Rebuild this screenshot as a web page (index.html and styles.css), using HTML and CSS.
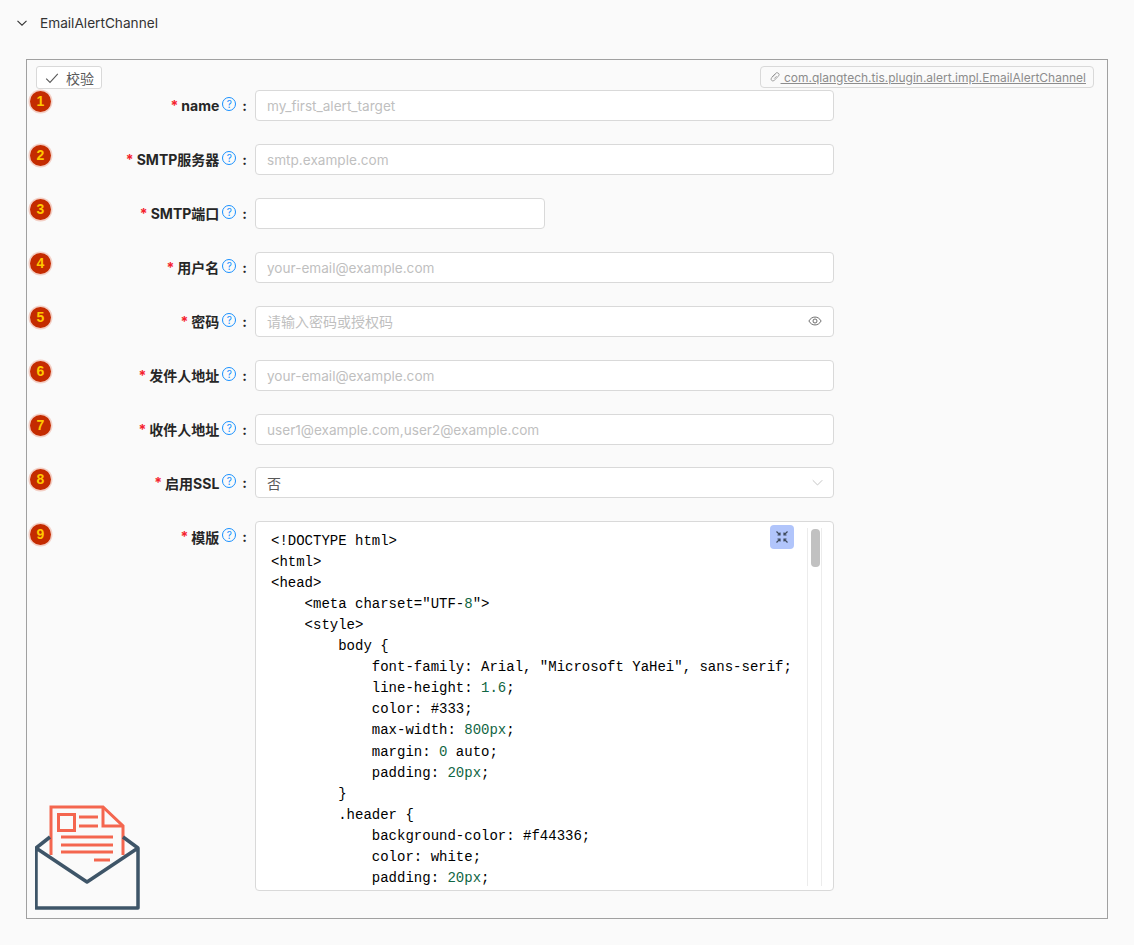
FILE: index.html
```html
<!DOCTYPE html>
<html lang="en">
<head>
    <meta charset="UTF-8">
    <title>EmailAlertChannel</title>
    <link rel="stylesheet" href="styles.css">
</head>
<body>
    <div class="panel-head">
        <svg class="chevron" viewBox="0 0 12 12"><path d="M1.5 3.8 6 8.2l4.5-4.4"/></svg>
        <span>EmailAlertChannel</span>
    </div>
    <div class="panel">
        <div class="toolbar">
            <button class="check-btn">
                <svg viewBox="0 0 14 14"><path d="M1.2 7.6 5 11.4 12.8 2.8"/></svg>
                <span>校验</span>
            </button>
            <a class="plugin-link">
                <svg viewBox="0 0 12 12"><path d="M6.8 2.6 2.6 6.8a1.8 1.8 0 0 0 2.6 2.6l4.6-4.6a1.3 1.3 0 0 0-3.4-2.2L2.9 6.1M5.2 7.6l2.4-2.4"/></svg>
                <span>&nbsp;com.qlangtech.tis.plugin.alert.impl.EmailAlertChannel</span>
            </a>
        </div>

        <div class="row">
            <div class="badge">1</div>
            <label class="label"><i>*</i><span>name</span><b class="help">?</b><em>:</em></label>
            <input class="input" placeholder="my_first_alert_target">
        </div>
        <div class="row">
            <div class="badge">2</div>
            <label class="label"><i>*</i><span>SMTP服务器</span><b class="help">?</b><em>:</em></label>
            <input class="input" placeholder="smtp.example.com">
        </div>
        <div class="row">
            <div class="badge">3</div>
            <label class="label"><i>*</i><span>SMTP端口</span><b class="help">?</b><em>:</em></label>
            <input class="input short">
        </div>
        <div class="row">
            <div class="badge">4</div>
            <label class="label"><i>*</i><span>用户名</span><b class="help">?</b><em>:</em></label>
            <input class="input" placeholder="your-email@example.com">
        </div>
        <div class="row">
            <div class="badge">5</div>
            <label class="label"><i>*</i><span>密码</span><b class="help">?</b><em>:</em></label>
            <div class="input with-icon">
                <span class="hint">请输入密码或授权码</span>
                <svg class="eye" viewBox="0 0 16 16"><path d="M1 8c1.800-3 4.100-4.500 7-4.500S13.200 5 15 8c-1.800 3-4.100 4.500-7 4.500S2.800 11 1 8z"/><circle cx="8" cy="8" r="2.300"/></svg>
            </div>
        </div>
        <div class="row">
            <div class="badge">6</div>
            <label class="label"><i>*</i><span>发件人地址</span><b class="help">?</b><em>:</em></label>
            <input class="input" placeholder="your-email@example.com">
        </div>
        <div class="row">
            <div class="badge">7</div>
            <label class="label"><i>*</i><span>收件人地址</span><b class="help">?</b><em>:</em></label>
            <input class="input" placeholder="user1@example.com,user2@example.com">
        </div>
        <div class="row">
            <div class="badge low">8</div>
            <label class="label"><i>*</i><span>启用SSL</span><b class="help">?</b><em>:</em></label>
            <div class="input with-icon">
                <span class="value">否</span>
                <svg class="caret" viewBox="0 0 12 12"><path d="M.8 3.500 6 8.700l5.200-5.200"/></svg>
            </div>
        </div>
        <div class="row">
            <div class="badge lower">9</div>
            <label class="label"><i>*</i><span>模版</span><b class="help">?</b><em>:</em></label>
            <div class="editor">
<pre class="code">&lt;!DOCTYPE html&gt;
&lt;html&gt;
&lt;head&gt;
    &lt;meta charset="UTF-<span class="num">8</span>"&gt;
    &lt;style&gt;
        body {
            font-family: Arial, "Microsoft YaHei", sans-serif;
            line-height: <span class="num">1.6</span>;
            color: #333;
            max-width: <span class="num">800px</span>;
            margin: <span class="num">0</span> auto;
            padding: <span class="num">20px</span>;
        }
        .header {
            background-color: #f44336;
            color: white;
            padding: <span class="num">20px</span>;</pre>
                <div class="track"><div class="thumb"></div></div>
                <button class="shrink">
                    <svg viewBox="0 0 14 14"><path d="M1.500 1.500 5 5M5 2.500V5H2.500M12.500 1.500 9 5M9 2.500V5h2.500M1.500 12.500 5 9M5 11.500V9H2.500M12.500 12.500 9 9M9 11.500V9h2.500"/></svg>
                </button>
            </div>
        </div>

        <svg class="mail-icon" viewBox="0 0 106 106">
            <g class="paper">
                <path d="M16 50V2h52l20 19v29"/>
                <path d="M68 2v19h20"/>
                <rect x="23.500" y="9.500" width="16" height="16"/>
                <path d="M44 12h19M44 21h19M26 32h52M26 40h52M26 47h52M59 55h16"/>
            </g>
            <g class="envelope">
                <path d="M1 43v60h102V43L52 77 1 43zM1 43l14-11M103 43 88 32"/>
            </g>
        </svg>
    </div>
</body>
</html>
```
FILE: styles.css
```css
* {
    box-sizing: border-box;
}
body {
    margin: 0;
    background-color: #fafafa;
    color: #262626;
    font-family: Inter, "Noto Sans CJK SC", sans-serif;
    font-size: 14px;
}
.panel-head {
    display: flex;
    align-items: center;
    gap: 12px;
    height: 45px;
    padding-left: 16px;
    font-size: 13.65px;
    color: #333;
}
.chevron {
    width: 12px;
    height: 12px;
    fill: none;
    stroke: #333;
    stroke-width: 1.1;
}
.panel {
    position: relative;
    width: 1082px;
    height: 860px;
    margin: 14px 0 0 26px;
    border: 1px solid #a0a0a0;
}
.toolbar {
    display: flex;
    justify-content: space-between;
    align-items: flex-start;
    height: 29.8px;
    padding: 6px 13px 0 9px;
}
.check-btn {
    display: flex;
    align-items: center;
    gap: 7px;
    width: 66px;
    height: 23px;
    padding: 0 0 0 8px;
    border: 1px solid #d9d9d9;
    border-radius: 3px;
    background: #fff;
    color: #595959;
    font: inherit;
    white-space: nowrap;
}
.check-btn svg {
    flex: none;
    width: 14px;
    height: 14px;
    fill: none;
    stroke: #595959;
    stroke-width: 1.1;
}
.plugin-link {
    display: flex;
    align-items: center;
    height: 22px;
    padding: 0 7px 0 7px;
    border: 1px solid #d9d9d9;
    border-radius: 4px;
    color: #8c8c8c;
    font-size: 12px;
    text-decoration: underline;
}
.plugin-link svg {
    width: 12px;
    height: 12px;
    margin-left: 1px;
    fill: none;
    stroke: #8c8c8c;
    stroke-width: .8;
}
.row {
    display: flex;
    align-items: flex-start;
    margin-bottom: 22.96px;
    padding-left: 3px;
}
.badge {
    flex: none;
    width: 21px;
    height: 21px;
    margin-top: 1px;
    border-radius: 50%;
    background: #c42b00;
    box-shadow: 0 0 0 1.5px #f3cfc5;
    color: #ffc800;
    font: 700 14px/21px "Liberation Sans", sans-serif;
    text-align: center;
}
.badge.low {
    margin-top: 2px;
}
.badge.lower {
    margin-top: 3px;
}
.label {
    display: flex;
    justify-content: flex-end;
    align-items: center;
    width: 197px;
    height: 31px;
    color: #262626;
    font-weight: 700;
    font-size: 14px;
    white-space: pre;
}
.label i {
    margin-right: 3px;
    color: #f5222d;
    font-style: normal;
}
.label em {
    margin-left: 6px;
    margin-right: 1px;
    font-style: normal;
}
.help {
    width: 14px;
    height: 14px;
    margin: -3px 0 0 3px;
    border: 1px solid #1890ff;
    border-radius: 50%;
    color: #1890ff;
    font-weight: 400;
    font-size: 10px;
    line-height: 12px;
    text-align: center;
}
.input {
    width: 579px;
    height: 31px;
    margin-left: 7px;
    padding: 1px 11px 0;
    border: 1px solid #d9d9d9;
    border-radius: 4px;
    background: #fff;
    color: #262626;
    font: inherit;
    font-size: 13.6px;
    outline: none;
}
.input::placeholder, .hint {
    color: #bfbfbf;
}
.hint, .value {
    font-size: 14px;
}
.with-icon {
    padding-top: 0;
}
.short {
    width: 290px;
}
.with-icon {
    display: flex;
    justify-content: space-between;
    align-items: center;
}
.value {
    color: #595959;
}
.eye {
    width: 14px;
    height: 14px;
    fill: none;
    stroke: #595959;
    stroke-width: 1;
}
.caret {
    width: 11px;
    height: 11px;
    margin-right: -1px;
    fill: none;
    stroke: #bfbfbf;
    stroke-width: 1;
}
.editor {
    position: relative;
    width: 579px;
    height: 370px;
    margin-left: 7px;
    overflow: hidden;
    border: 1px solid #d9d9d9;
    border-radius: 4px;
    background: #fff;
}
.code {
    margin: 0;
    padding: 8.500px 0 0 15px;
    color: #000;
    font: 14px/21.06px "Liberation Mono", monospace;
}
.num {
    color: #116644;
}
.track {
    position: absolute;
    top: 6px;
    right: 11px;
    bottom: 4px;
    width: 15px;
    border-left: 1px solid #ececec;
    border-right: 1px solid #ececec;
}
.thumb {
    width: 9px;
    height: 38px;
    margin: 1px 0 0 3px;
    border-radius: 4px;
    background: #c1c1c1;
}
.shrink {
    position: absolute;
    top: 3px;
    right: 39px;
    display: flex;
    justify-content: center;
    align-items: center;
    width: 24px;
    height: 24px;
    padding: 0;
    border: 0;
    border-radius: 4px;
    background: #b1c5fb;
}
.shrink svg {
    width: 14px;
    height: 14px;
    fill: none;
    stroke: #3e4a5c;
    stroke-width: 1.2;
}
.mail-icon {
    position: absolute;
    left: 8px;
    top: 745px;
    width: 106px;
    height: 106px;
    fill: none;
}
.paper {
    stroke: #f4664f;
    stroke-width: 3;
}
.envelope {
    stroke: #3e5568;
    stroke-width: 3.5;
    stroke-linejoin: round;
}
```
